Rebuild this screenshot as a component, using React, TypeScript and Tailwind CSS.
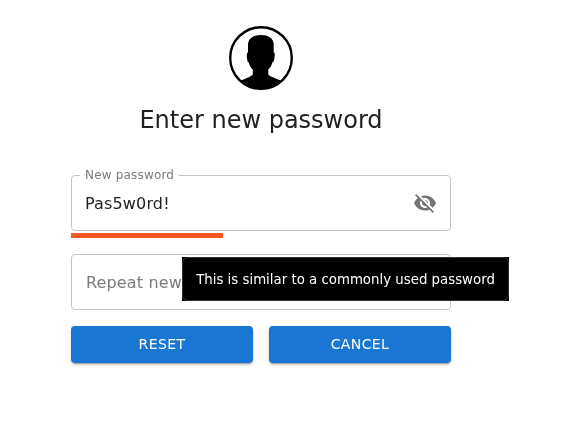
import React from 'react';
import { MdVisibilityOff } from 'react-icons/md';

function Avatar() {
  return (
    <svg className="h-16 w-16" viewBox="0 0 64 64" aria-hidden="true">
      <defs>
        <clipPath id="disc">
          <circle cx="32" cy="32" r="31.5" />
        </clipPath>
      </defs>
      <circle cx="32" cy="32" r="30.8" fill="white" stroke="black" strokeWidth="2.4" />
      <path
        clipPath="url(#disc)"
        d="M32 9.1C39 9.1 44.4 12.3 44.7 18V26.5C46 26.5 46 29 45.2 33.5C44.8 35.8 43.8 36.2 43.2 36.8C42.5 40 41 42 39.3 43.5V48.5C42 51.5 49 52.5 54 56L52 64H12L10 56C15 52.5 21 51.5 23.8 48.5V43.5C22 42 20.5 40 19.9 36.8C19.2 36.2 18.4 35.8 18.2 33.5C17.5 29 17.8 26.5 19 26.5V18C19.5 12.3 25 9.1 32 9.1Z"
      />
    </svg>
  );
}

function ActionButton({ children }: { children: React.ReactNode }) {
  return (
    <button className="h-[37px] flex-1 rounded bg-[#1976d2] text-sm leading-[24.5px] tracking-[0.4px] text-white uppercase shadow-[0px_3px_1px_-2px_rgba(0,0,0,0.2),0px_2px_2px_0px_rgba(0,0,0,0.14),0px_1px_5px_0px_rgba(0,0,0,0.12)]">
      {children}
    </button>
  );
}

export default function App() {
  return (
    <main className="h-[426px] w-full overflow-hidden bg-white pt-[26px] pl-[71px] font-['DejaVu_Sans',sans-serif] text-[#212121] antialiased">
      <div className="flex w-[380px] flex-col will-change-transform">
        <div className="flex justify-center">
          <Avatar />
        </div>
        <h1 className="mt-3.5 text-center text-2xl leading-8">Enter new password</h1>
        <div className="relative mt-[39px] flex h-14 items-center justify-between rounded border border-[#c4c4c4] px-[13px]">
          <label className="absolute -top-[9px] left-2 bg-white px-[5px] text-xs leading-4 tracking-[0.18px] text-[#7b7b7b]">
            New password
          </label>
          <span className="pt-0.5 text-base leading-6 tracking-[0.15px]">Pas5w0rd!</span>
          <MdVisibilityOff className="h-6 w-6 text-[#757575]" />
        </div>
        <div className="mt-0.5 h-[5px] w-[152px] bg-[#ff5722]" />
        <div className="relative mt-4 flex h-14 items-center rounded border border-[#c4c4c4] px-3.5">
          <span className="pt-0.5 text-base leading-6 tracking-[0.15px] text-[#7b7b7b]">Repeat new</span>
          <div className="absolute top-[2px] left-[110px] h-11 w-[327px] bg-black">
            <div className="flex h-full items-center justify-center rounded-md border border-[#333] pt-0.5 text-[13.33px] whitespace-nowrap text-white">
              This is similar to a commonly used password
            </div>
          </div>
        </div>
        <div className="mt-4 flex gap-4">
          <ActionButton>Reset</ActionButton>
          <ActionButton>Cancel</ActionButton>
        </div>
      </div>
    </main>
  );
}
